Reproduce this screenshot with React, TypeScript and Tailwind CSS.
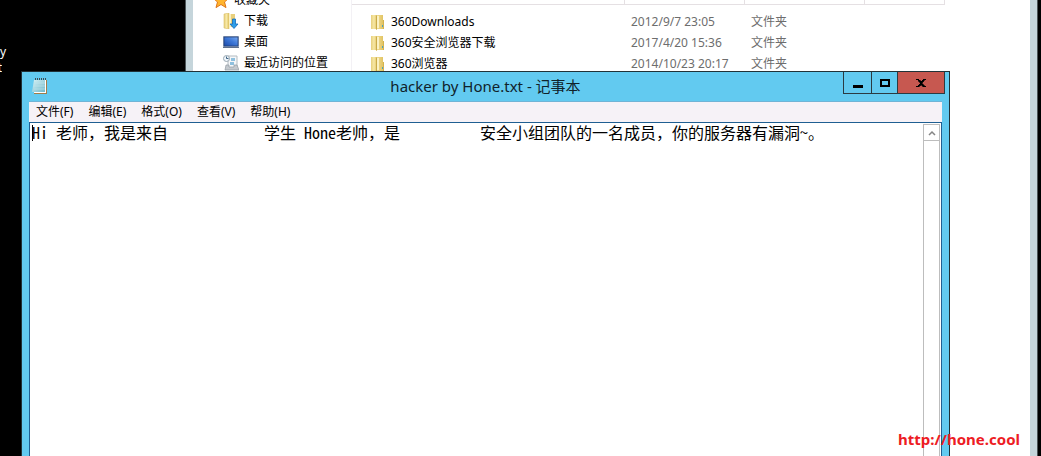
import type { ReactNode } from "react";

const files = [
  { name: "360Downloads", date: "2012/9/7 23:05", type: "文件夹" },
  { name: "360安全浏览器下载", date: "2017/4/20 15:36", type: "文件夹" },
  { name: "360浏览器", date: "2014/10/23 20:17", type: "文件夹" },
];

const menus = ["文件(F)", "编辑(E)", "格式(O)", "查看(V)", "帮助(H)"];

const note =
  "Hi 老师，我是来自            学生 Hone老帅，是          安全小组团队的一名成员，你的服务器有漏洞~。";

function FolderIcon() {
  return (
    <svg width="14" height="16" viewBox="0 0 14 16" aria-hidden="true">
      <defs>
        <linearGradient id="folderFront" x1="0" x2="1">
          <stop offset="0" stopColor="#e6cf7c" />
          <stop offset=".5" stopColor="#f7e8a6" />
          <stop offset="1" stopColor="#e0c362" />
        </linearGradient>
        <linearGradient id="folderBack" x1="0" x2="1">
          <stop offset="0" stopColor="#f3e09a" />
          <stop offset="1" stopColor="#dfc05c" />
        </linearGradient>
      </defs>
      <path d="M5 1h7v5h1v9H5z" fill="url(#folderBack)" />
      <path d="M0 1h5l1 1v14l-1-1H0z" fill="url(#folderFront)" />
      <path d="M5 1l1 1v14l-1-1z" fill="#c9aa4a" />
      <path d="M6 2h2v12H6z" fill="#fbf2c4" />
      <path d="M12 6h1v9h-1z" fill="#d3b24e" />
      <path d="M11 11h1v2h-1z" fill="#4aa3bd" />
    </svg>
  );
}

function StarIcon() {
  return (
    <svg width="16" height="16" viewBox="0 0 16 16" aria-hidden="true">
      <path d="M8 0l2.200 5.500 5.800.5-4.500 4 1.500 5.600L8 12.500 3 15.600 4.500 10 0 6l5.800-.5z" fill="#ffb52e" stroke="#df7417" />
    </svg>
  );
}

function DownloadIcon() {
  return (
    <svg width="16" height="16" viewBox="0 0 16 16" aria-hidden="true">
      <path d="M5 1h7v13H5z" fill="#e9d07c" />
      <path d="M1 1l5-1v16l-5-1z" fill="url(#folderFront)" stroke="#dcc06a" strokeWidth=".6" />
      <path d="M6 1h2v13H6z" fill="#fbf0c0" />
      <path d="M9.500 6h3v5H15l-4 4.500L7 11h2.500z" fill="#2d9eea" stroke="#1569b6" strokeWidth=".8" />
    </svg>
  );
}

function DesktopIcon() {
  return (
    <svg width="16" height="16" viewBox="0 0 16 16" aria-hidden="true">
      <defs>
        <linearGradient id="screen" x1="0" y1="1" x2="1" y2="0">
          <stop offset="0" stopColor="#1a48a8" />
          <stop offset=".55" stopColor="#3f79d8" />
          <stop offset="1" stopColor="#7aaaf0" />
        </linearGradient>
      </defs>
      <path d="M0 2h16v12H0z" fill="#98a6bb" />
      <path d="M1 3h14v9H1z" fill="url(#screen)" stroke="#25427c" strokeWidth=".8" />
      <path d="M0 13h16v1H0z" fill="#5f708c" />
    </svg>
  );
}

function RecentIcon() {
  return (
    <svg width="16" height="16" viewBox="0 0 16 16" aria-hidden="true">
      <path d="M5 1h9v12H5z" fill="#f5f7f9" stroke="#b3bbc1" />
      <path d="M8 3h4v3H8zM7 7h4v3H7z" fill="#8fc0de" />
      <path d="M3 10h3v2h5v-2h3l2 5H2z" fill="#c4c9ce" stroke="#949ca3" strokeWidth=".7" />
      <circle cx="3.500" cy="3.500" r="3" fill="#eef5fb" stroke="#9ba8b2" />
      <path d="M3.500 1.500v2h2" stroke="#3f6282" fill="none" />
    </svg>
  );
}

function NotepadIcon() {
  return (
    <svg width="16" height="17" viewBox="0 0 16 17" aria-hidden="true">
      <defs>
        <linearGradient id="pad" x1="0" y1="0" x2="1" y2="1">
          <stop offset="0" stopColor="#d9f2f5" />
          <stop offset="1" stopColor="#6fb9cb" />
        </linearGradient>
      </defs>
      <path d="M3 2h11v13H2z" fill="#fff" />
      <path d="M14 2h1v14H2v-1h12z" fill="#a37d4a" />
      <path d="M2 2h11v12H0z" fill="url(#pad)" />
      <path d="M2 5h11M2 8h11M2 11h11" stroke="#bfe3ea" strokeWidth=".7" />
      <path d="M3.500 0v2M5.500 0v2M7.500 0v2M9.500 0v2M11.500 0v2M13.500 0v2" stroke="#3d4d53" />
    </svg>
  );
}

function SideItem({ icon, label, nested = true }: { icon: ReactNode; label: string; nested?: boolean }) {
  return (
    <li className={nested ? "pl-[30px]" : "pl-5"}>
      <a href="#" className="flex h-[21px] items-center gap-[5px] whitespace-nowrap">
        {icon}
        <span>{label}</span>
      </a>
    </li>
  );
}

function Explorer() {
  return (
    <section
      aria-label="文件资源管理器"
      className="absolute inset-y-0 left-[185px] right-[3px] flex overflow-hidden border-x border-[#4c5558] bg-[#c5d5db] px-[7px] text-xs text-black"
    >
      <div className="flex min-w-0 flex-1 bg-white">
        <nav className="w-[159px] shrink-0 border-r border-[#f3f1f5]">
          <ul className="-mt-[11px]">
            <SideItem icon={<StarIcon />} label="收藏夹" nested={false} />
            <SideItem icon={<DownloadIcon />} label="下载" />
            <SideItem icon={<DesktopIcon />} label="桌面" />
            <SideItem icon={<RecentIcon />} label="最近访问的位置" />
          </ul>
        </nav>
        <div>
          <table className="w-[593px] table-fixed border-separate border-spacing-0">
            <colgroup>
              <col className="w-[273px]" />
              <col className="w-[120px]" />
              <col className="w-[120px]" />
              <col className="w-20" />
            </colgroup>
            <thead>
              <tr className="h-[5px]">
                <td className="border-b border-r border-[#e5e0e3] p-0" />
                <td className="border-b border-r border-[#e5e0e3] p-0" />
                <td className="border-b border-r border-[#e5e0e3] p-0" />
                <td className="border-b border-r border-[#e5e0e3] p-0" />
              </tr>
            </thead>
            <tbody className="before:block before:h-[6px] before:content-['']">
              {files.map((f) => (
                <tr key={f.name} className="h-[21px]">
                  <td className="p-0 pl-[19px]">
                    <span className="flex items-center gap-[6px]">
                      <FolderIcon />
                      {f.name}
                    </span>
                  </td>
                  <td className="whitespace-nowrap p-0 pl-[6px] text-[#6d6d6d]">{f.date}</td>
                  <td className="p-0 pl-[6px] text-[#6d6d6d]">{f.type}</td>
                  <td className="p-0" />
                </tr>
              ))}
            </tbody>
          </table>
        </div>
      </div>
    </section>
  );
}

function Notepad() {
  return (
    <section
      aria-label="记事本"
      className="absolute bottom-0 left-[21px] right-[91px] top-[71px] flex flex-col border-x border-t border-[#213238] bg-[#62caf0] px-[7px]"
    >
      <header className="flex h-[29px] shrink-0 items-start">
        <div className="flex h-[29px] w-[99px] items-center pl-[3px]">
          <NotepadIcon />
        </div>
        <h1 className="flex-1 text-center text-[15px] leading-[29px] text-[#10222a]">hacker by Hone.txt - 记事本</h1>
        <div className="-mr-[3px] flex h-[22px] border-x border-b border-[#2b3b42]">
          <button aria-label="最小化" className="flex w-[28px] items-center justify-center border-r border-[#2b3b42]">
            <svg width="10" height="12" viewBox="0 0 10 12" aria-hidden="true">
              <path d="M0 8h10v3H0z" />
            </svg>
          </button>
          <button aria-label="最大化" className="flex w-[26px] items-center justify-center border-r border-[#2b3b42]">
            <svg width="10" height="8" viewBox="0 0 10 8" aria-hidden="true">
              <path d="M1 1h8v6H1z" fill="none" stroke="#000" strokeWidth="2" />
            </svg>
          </button>
          <button aria-label="关闭" className="flex w-[46px] items-center justify-center bg-[#c75850]">
            <svg width="10" height="8" viewBox="0 0 10 8" shapeRendering="crispEdges" aria-hidden="true">
              <path d="M0 0h3v1h1v1h2V1h1V0h3v1H8v1H7v1H6v2h1v1h1v1h2v1H7V7H6V6H4v1H3v1H0V7h2V6h1V5h1V3H3V2H2V1H0z" />
              <path d="M2 1h2v1h2V1h2v1H7v1H6v2h1v1h1v1H6V6H4v1H2V6h1V5h1V3H3V2H2z" stroke="#000" strokeWidth=".6" />
            </svg>
          </button>
        </div>
      </header>
      <nav className="flex h-[21px] shrink-0 items-center gap-[15px] border-t border-[#70b4d6] bg-[#f6f2f7] pl-[7px] text-xs text-black">
        {menus.map((m) => (
          <button key={m} className="whitespace-nowrap">
            {m}
          </button>
        ))}
      </nav>
      <div className="relative flex min-h-0 flex-1 border-x border-t border-[#1f5f92] bg-white">
        <textarea
          aria-label="文本内容"
          spellCheck={false}
          defaultValue={note}
          className="min-w-0 flex-1 resize-none overflow-hidden whitespace-pre bg-white pl-[2px] font-['Noto_Sans_Mono_CJK_SC','Noto_Sans_CJK_SC',monospace] text-base leading-[18px] text-black outline-none"
        />
        <span className="absolute left-[2px] top-[2px] h-4 w-px bg-black" />
        <div className="mr-px mt-px w-[17px] shrink-0 border-x border-t border-[#bdbdbd]">
          <button aria-label="向上滚动" className="flex h-4 w-full items-center justify-center border-b border-[#bdbdbd]">
            <svg width="8" height="6" viewBox="0 0 8 6" aria-hidden="true">
              <path d="M1 5l3-3 3 3" fill="none" stroke="#858585" strokeWidth="1.500" />
            </svg>
          </button>
        </div>
      </div>
    </section>
  );
}

export default function App() {
  return (
    <main className="relative h-screen overflow-hidden bg-black font-['Noto_Sans','Noto_Sans_CJK_SC',sans-serif]">
      <div className="flex flex-col items-start pt-[44px] text-xs leading-4 text-white">
        <span>y</span>
        <span className="flex w-[2px] justify-end overflow-hidden">t</span>
      </div>
      <Explorer />
      <Notepad />
      <a href="http://hone.cool" className="absolute bottom-[7px] right-[21px] text-[15px] font-bold leading-5 text-[#ed1c24]">
        http://hone.cool
      </a>
    </main>
  );
}
